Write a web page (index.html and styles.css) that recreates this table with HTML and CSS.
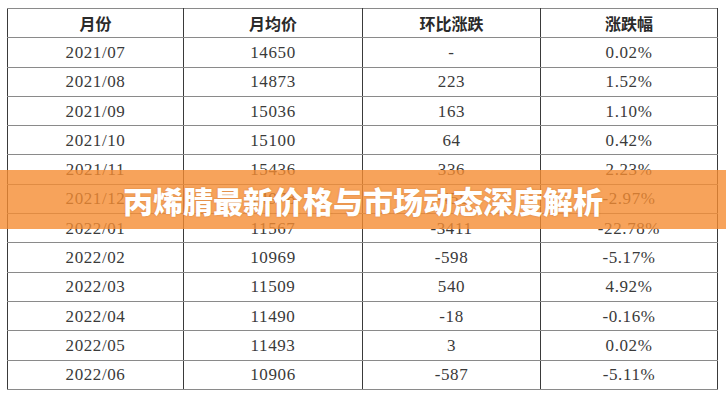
FILE: index.html
```html
<!DOCTYPE html>
<html lang="zh">
<head>
<meta charset="utf-8">
<link rel="stylesheet" href="styles.css">
</head>
<body>
<div class="page">
  <table class="data">
    <colgroup>
      <col class="c1"><col class="c2"><col class="c3"><col class="c4">
    </colgroup>
    <thead>
      <tr><th>月份</th><th>月均价</th><th>环比涨跌</th><th>涨跌幅</th></tr>
    </thead>
    <tbody>
      <tr><td>2021/07</td><td>14650</td><td>-</td><td>0.02%</td></tr>
      <tr><td>2021/08</td><td>14873</td><td>223</td><td>1.52%</td></tr>
      <tr><td>2021/09</td><td>15036</td><td>163</td><td>1.10%</td></tr>
      <tr><td>2021/10</td><td>15100</td><td>64</td><td>0.42%</td></tr>
      <tr><td>2021/11</td><td>15436</td><td>336</td><td>2.23%</td></tr>
      <tr><td>2021/12</td><td>14978</td><td>-458</td><td>-2.97%</td></tr>
      <tr><td>2022/01</td><td>11567</td><td>-3411</td><td>-22.78%</td></tr>
      <tr><td>2022/02</td><td>10969</td><td>-598</td><td>-5.17%</td></tr>
      <tr><td>2022/03</td><td>11509</td><td>540</td><td>4.92%</td></tr>
      <tr><td>2022/04</td><td>11490</td><td>-18</td><td>-0.16%</td></tr>
      <tr><td>2022/05</td><td>11493</td><td>3</td><td>0.02%</td></tr>
      <tr><td>2022/06</td><td>10906</td><td>-587</td><td>-5.11%</td></tr>
    </tbody>
  </table>
  <div class="banner"><h1 class="title">丙烯腈最新价格与市场动态深度解析</h1></div>
</div>
</body>
</html>
```

FILE: styles.css
```css
html, body {
  margin: 0;
  padding: 0;
  background: #ffffff;
}
.page {
  position: relative;
  width: 726px;
  height: 400px;
  padding: 8px 0 0 7px;
  box-sizing: border-box;
  overflow: hidden;
}
.data {
  border-collapse: collapse;
  table-layout: fixed;
  width: 710px;
  font-family: "Liberation Serif", "Noto Sans CJK SC", serif;
  font-size: 17px;
  color: #3a3a3a;
  border: 1px solid #3a3a3a;
}
.c1 { width: 176px; }
.c2 { width: 179px; }
.c3 { width: 178px; }
.c4 { width: 177px; }
.data th, .data td {
  height: 28.3px;
  padding: 0;
  text-align: center;
  vertical-align: middle;
  border-left: 1px solid #3a3a3a;
  border-right: 1px solid #3a3a3a;
  border-top: 1px solid #8a8a8a;
  border-bottom: 1px solid #8a8a8a;
  line-height: 1;
  letter-spacing: 0.6px;
}
.data th {
  font-family: "Noto Sans CJK SC", sans-serif;
  font-weight: 700;
  font-size: 16px;
  color: #2a2a2a;
  letter-spacing: 0;
}
.banner {
  position: absolute;
  left: 0;
  top: 170px;
  width: 726px;
  height: 59px;
  background: rgba(245, 140, 50, 0.8);
  display: flex;
  align-items: center;
  justify-content: center;
}
.title {
  margin: 0;
  font-family: "Noto Sans CJK SC", sans-serif;
  font-weight: 900;
  font-size: 30px;
  line-height: 1;
  color: #ffffff;
  text-shadow: 0 0 2px rgba(150, 70, 10, 0.35);
}
```
